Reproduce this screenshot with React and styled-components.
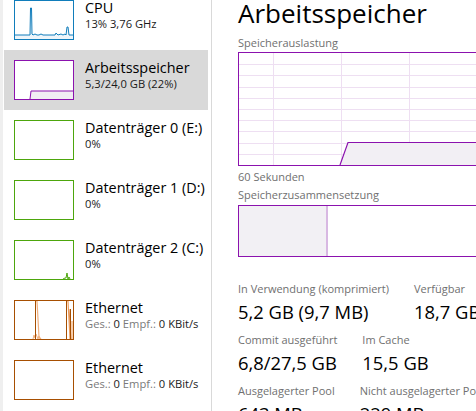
import React from "react";
import styled, { createGlobalStyle } from "styled-components";

const GlobalStyle = createGlobalStyle`
  html, body {
    margin: 0;
    padding: 0;
    background: #ffffff;
    overflow: hidden;
  }
  body {
    font-family: "Open Sans", "Noto Sans", sans-serif;
    color: #000;
  }
`;

const COLORS = {
  cpu: "#117dbb",
  mem: "#8b12ae",
  disk: "#4da60c",
  net: "#a74f01",
};

const Window = styled.div`
  display: flex;
  width: 476px;
  height: 411px;
  overflow: hidden;
`;

const Sidebar = styled.div`
  flex: 0 0 212px;
  box-sizing: border-box;
  border-left: 3px solid #efefef;
  border-right: 1px solid #d9d9d9;
  padding: 0 3px 0 1px;
  overflow: hidden;
`;

const List = styled.div`
  margin-top: -10px;
  display: flex;
  flex-direction: column;
`;

const Row = styled.div`
  display: flex;
  align-items: flex-start;
  height: 60px;
  padding: 10px 0 0 10px;
  box-sizing: border-box;
  background: ${(p) => (p.$selected ? "#d9d9d9" : "transparent")};
`;

const Thumb = styled.div`
  flex: 0 0 auto;
  width: 60px;
  height: 40px;
  box-sizing: border-box;
  border: 1px solid ${(p) => p.$color};
  background: #fff;
  overflow: hidden;

  svg {
    display: block;
  }
`;

const RowText = styled.div`
  margin-left: 11px;
  margin-top: -2px;
  display: flex;
  flex-direction: column;
  white-space: nowrap;
`;

const RowTitle = styled.div`
  font-size: 14.4px;
  line-height: 19px;
  color: #000;
`;

const RowSub = styled.div`
  font-size: 11.2px;
  line-height: 14px;
  color: #1a1a1a;
`;

const Muted = styled.span`
  color: #7a7a7a;
`;

const Main = styled.div`
  flex: 1 1 auto;
  padding-left: 26px;
  overflow: hidden;
  white-space: nowrap;
`;

const Title = styled.h1`
  margin: 0;
  font-weight: 400;
  font-size: 26px;
  line-height: 34px;
  margin-top: -4px;
`;

const Caption = styled.div`
  font-size: 11px;
  line-height: 14px;
  color: #707070;
  margin-top: ${(p) => p.$top || 0}px;
`;

const GraphBox = styled.div`
  width: 300px;
  height: ${(p) => p.$h}px;
  box-sizing: border-box;
  border: 1px solid ${COLORS.mem};
  margin-top: ${(p) => p.$top || 0}px;
  display: flex;
  overflow: hidden;

  svg {
    display: block;
  }
`;

const CompUsed = styled.div`
  width: 87px;
  height: 100%;
  background: #f2f0f4;
  border-right: 2px solid #d8b8e2;
`;

const Stats = styled.div`
  display: flex;
  flex-direction: column;
  margin-top: 25px;
  gap: 8px;
`;

const StatRow = styled.div`
  display: flex;
  gap: 25px;
`;

const Stat = styled.div`
  display: flex;
  flex-direction: column;
`;

const StatLabel = styled.div`
  font-size: 11px;
  line-height: 14px;
  color: #707070;
`;

const StatValue = styled.div`
  font-size: 18.4px;
  line-height: 26px;
  color: #000;
  margin-top: 3px;
`;

function CpuGraph() {
  const pts =
    "0,34 15,34 15.5,7 16.5,7 17,33 18,34 20,33 22,34 24,34 26,33 28,34 40,34 41,32 43,34 46,33 48,34 50,33 51,34 52,26 53,26 54,34 58,34";
  return (
    <svg width="58" height="38">
      <polygon points={`${pts} 58,38 0,38`} fill="#eef5fa" />
      <polyline points={pts} fill="none" stroke={COLORS.cpu} strokeWidth="1" />
    </svg>
  );
}

function MemThumb() {
  return (
    <svg width="58" height="38">
      <polygon points="15,38 16,30 58,30 58,38" fill="#f1eef3" />
      <polyline points="15,38 16,30 58,30" fill="none" stroke={COLORS.mem} strokeWidth="1" />
    </svg>
  );
}

function DiskSpike() {
  return (
    <svg width="58" height="38">
      <polyline
        points="48,38 50,37 51,37 52,32 53,38 54,36 55,38"
        fill="none"
        stroke={COLORS.disk}
        strokeWidth="1"
      />
    </svg>
  );
}

function NetGraph() {
  return (
    <svg width="58" height="38">
      <polyline points="18,38 19,34 20,37 21,33 23,38 24,35 25,38" fill="none" stroke="#f0b080" strokeWidth="1" />
      <line x1="20.5" y1="0" x2="20.5" y2="38" stroke={COLORS.net} strokeWidth="1" />
      <polyline points="21,0 22,0 24,36 26,38" fill="none" stroke="#f0b080" strokeWidth="1.2" />
      <line x1="51.5" y1="0" x2="51.5" y2="38" stroke={COLORS.net} strokeWidth="1" />
      <polyline points="52,0 53,0 55,38" fill="none" stroke="#f0a060" strokeWidth="1.2" />
      <polyline points="54,8 56,38" fill="none" stroke="#e09050" strokeWidth="1" />
      <line x1="55.5" y1="8" x2="55.5" y2="38" stroke={COLORS.net} strokeWidth="1" />
      <polyline points="57,20 57,38" fill="none" stroke="#f0a060" strokeWidth="1" />
    </svg>
  );
}

function UsageGraph() {
  const w = 298;
  const h = 112;
  const rows = [];
  for (let i = 1; i < 10; i++) {
    const y = Math.round((h / 10) * i) + 0.5;
    rows.push(<line key={"h" + i} x1="0" y1={y} x2={w} y2={y} stroke="#eedff2" strokeWidth="1" />);
  }
  const cols = [];
  for (let x = 34; x < w; x += 68) {
    cols.push(<line key={"v" + x} x1={x + 0.5} y1="0" x2={x + 0.5} y2={h} stroke="#eedff2" strokeWidth="1" />);
  }
  return (
    <svg width={w} height={h}>
      {rows}
      {cols}
      <polygon points={`101,${h} 109,89 ${w},89 ${w},${h}`} fill="#f2eff4" />
      <polyline points={`101,${h} 109,89.5 ${w},89.5`} fill="none" stroke={COLORS.mem} strokeWidth="1.2" />
    </svg>
  );
}

const items = [
  { title: "CPU", sub: "13% 3,76 GHz", color: COLORS.cpu, graph: <CpuGraph /> },
  {
    title: "Arbeitsspeicher",
    sub: "5,3/24,0 GB (22%)",
    color: COLORS.mem,
    graph: <MemThumb />,
    selected: true,
  },
  { title: "Datenträger 0 (E:)", sub: "0%", color: COLORS.disk },
  { title: "Datenträger 1 (D:)", sub: "0%", color: COLORS.disk },
  { title: "Datenträger 2 (C:)", sub: "0%", color: COLORS.disk, graph: <DiskSpike /> },
  { title: "Ethernet", net: true, color: COLORS.net, graph: <NetGraph /> },
  { title: "Ethernet", net: true, color: COLORS.net },
];

const stats = [
  [
    { label: "In Verwendung (komprimiert)", value: "5,2 GB (9,7 MB)" },
    { label: "Verfügbar", value: "18,7 GB" },
  ],
  [
    { label: "Commit ausgeführt", value: "6,8/27,5 GB" },
    { label: "Im Cache", value: "15,5 GB" },
  ],
  [
    { label: "Ausgelagerter Pool", value: "643 MB" },
    { label: "Nicht ausgelagerter Pool", value: "229 MB" },
  ],
];

export default function App() {
  return (
    <>
      <GlobalStyle />
      <Window>
        <Sidebar>
          <List>
            {items.map((it, i) => (
              <Row key={i} $selected={it.selected}>
                <Thumb $color={it.color}>{it.graph}</Thumb>
                <RowText>
                  <RowTitle>{it.title}</RowTitle>
                  <RowSub>
                    {it.net ? (
                      <>
                        <Muted>Ges.:</Muted> 0 <Muted>Empf.:</Muted> 0 KBit/s
                      </>
                    ) : (
                      it.sub
                    )}
                  </RowSub>
                </RowText>
              </Row>
            ))}
          </List>
        </Sidebar>
        <Main>
          <Title>Arbeitsspeicher</Title>
          <Caption $top={6}>Speicherauslastung</Caption>
          <GraphBox $h={114} $top={2}>
            <UsageGraph />
          </GraphBox>
          <Caption $top={4}>60 Sekunden</Caption>
          <Caption $top={4}>Speicherzusammensetzung</Caption>
          <GraphBox $h={52} $top={3}>
            <CompUsed />
          </GraphBox>
          <Stats>
            {stats.map((row, r) => (
              <StatRow key={r}>
                {row.map((s) => (
                  <Stat key={s.label}>
                    <StatLabel>{s.label}</StatLabel>
                    <StatValue>{s.value}</StatValue>
                  </Stat>
                ))}
              </StatRow>
            ))}
          </Stats>
        </Main>
      </Window>
    </>
  );
}
